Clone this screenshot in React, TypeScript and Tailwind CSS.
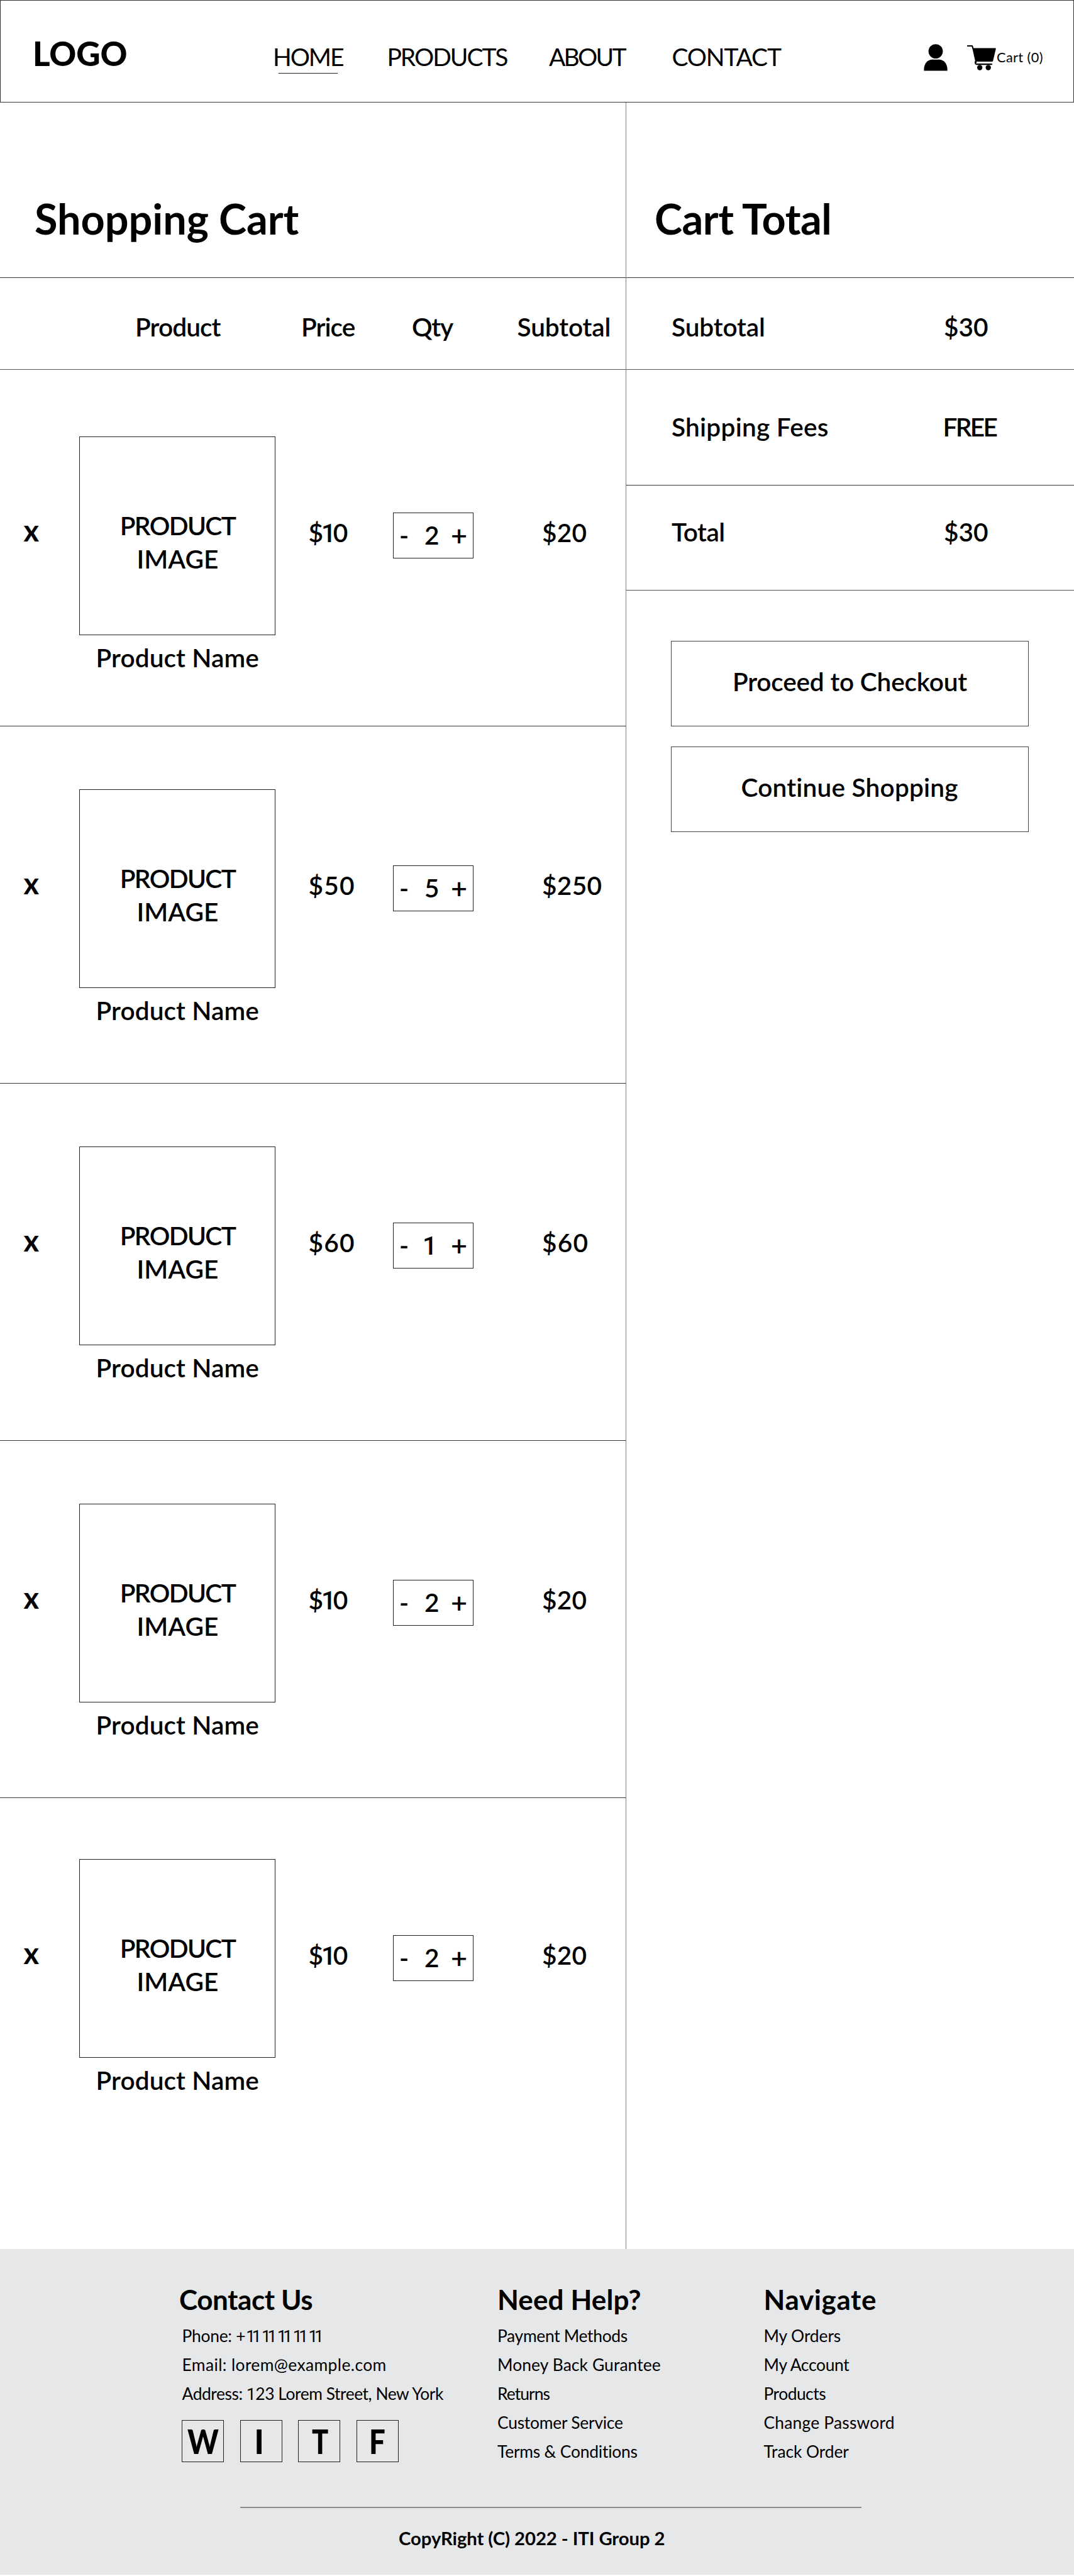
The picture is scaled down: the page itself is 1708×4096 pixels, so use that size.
import type { ReactNode } from "react";

type CartItem = {
  price: ReactNode;
  priceClass: string;
  qty: ReactNode;
  subtotal: string;
  subtotalClass: string;
  rowClass: string;
};

const One = () => <span className="mr-[-4.300px] ml-[-3px] font-[Roboto,sans-serif] font-medium">1</span>;

const ten = (
  <>
    $<One />0
  </>
);

const cartItems: CartItem[] = [
  { price: ten, priceClass: "tracking-normal", qty: "2", subtotal: "$20", subtotalClass: "tracking-[0.16px]", rowClass: "h-[567px] border-b pt-[106px]" },
  { price: "$50", priceClass: "tracking-[1.2px]", qty: "5", subtotal: "$250", subtotalClass: "tracking-[0.3px]", rowClass: "h-[568px] border-b pt-[100px]" },
  { price: "$60", priceClass: "tracking-[1.2px]", qty: <One />, subtotal: "$60", subtotalClass: "tracking-[1.2px]", rowClass: "h-[568px] border-b pt-[100px]" },
  { price: ten, priceClass: "tracking-normal", qty: "2", subtotal: "$20", subtotalClass: "tracking-[0.16px]", rowClass: "h-[568px] border-b pt-[100px]" },
  { price: ten, priceClass: "tracking-normal", qty: "2", subtotal: "$20", subtotalClass: "tracking-[0.16px]", rowClass: "h-[717px] pt-[97px]" },
];

const helpLinks = [
  { label: "Payment Methods", cls: "tracking-[-0.31px]" },
  { label: "Money Back Gurantee", cls: "tracking-[0.1px]" },
  { label: "Returns", cls: "tracking-[-0.92px]" },
  { label: "Customer Service", cls: "tracking-[-0.23px]" },
  { label: "Terms & Conditions", cls: "tracking-[-0.2px]" },
];

const navigateLinks = [
  { label: "My Orders", cls: "tracking-[-0.1px]" },
  { label: "My Account", cls: "tracking-[-0.3px]" },
  { label: "Products", cls: "tracking-[-0.5px]" },
  { label: "Change Password", cls: "tracking-[0.21px]" },
  { label: "Track Order", cls: "tracking-[-0.08px]" },
];

const socials = [
  { letter: "W", cls: "scale-x-[0.89] translate-x-[1px]" },
  { letter: "I", cls: "scale-x-[0.95] -translate-x-[3px]" },
  { letter: "T", cls: "scale-x-[0.82] translate-x-[1px]" },
  { letter: "F", cls: "scale-x-[0.86] -translate-x-[1px]" },
];

function UserIcon() {
  return (
    <svg className="mt-[69px] h-[43px] w-[38px] shrink-0" viewBox="0 0 38 43" fill="#000">
      <circle cx="19" cy="11.6" r="11.4" />
      <path d="M0.4 42.4V40.5C0.4 31.5 6 24.8 13.5 24.8H24.5C32 24.8 37.6 31.5 37.6 40.5V42.4Z" />
    </svg>
  );
}

function CartIcon() {
  return (
    <svg className="mt-[70px] ml-[31px] h-[41px] w-[46px] shrink-0" viewBox="331 87 153 137" preserveAspectRatio="none">
      <path d="M334 93.5H358L362 107" fill="none" stroke="#000" strokeWidth="7" strokeLinecap="round" strokeLinejoin="round" />
      <path d="M361 105H480Q484 105 483 110L468 173Q467 177 463 177H378Z" fill="#000" />
      <path d="M375 177L374.500 184Q375 191 382 191H461" fill="none" stroke="#000" strokeWidth="7" strokeLinecap="round" strokeLinejoin="round" />
      <path d="M362 107L379 184" fill="none" stroke="#000" strokeWidth="6" />
      <circle cx="398" cy="209" r="14" />
      <circle cx="443" cy="209" r="14" />
    </svg>
  );
}

function Header() {
  return (
    <header className="flex h-[163px] items-start border border-[#333]">
      <div className="mt-[54px] w-[433px] pl-[51px] text-[53px] leading-[60px] font-black tracking-[-0.16px]">LOGO</div>
      <nav className="flex w-[1035px] pt-[69px] text-[39px] leading-[40px]">
        <a className="w-[181.400px]">
          <span className="tracking-[-2.07px]">HOME</span>
          <span className="mt-[6px] ml-[9px] block h-px w-[94px] bg-[#231f20]" />
        </a>
        <a className="w-[257.600px] tracking-[-2.02px]">PRODUCTS</a>
        <a className="w-[195.400px] tracking-[-2.78px]">ABOUT</a>
        <a className="tracking-[-1.16px]">CONTACT</a>
      </nav>
      <UserIcon />
      <CartIcon />
      <span className="mt-[70px] ml-px text-[21.700px] leading-[40px] tracking-[0.4px] whitespace-nowrap">Cart (0)</span>
    </header>
  );
}

function CartRow({ item }: { item: CartItem }) {
  return (
    <div className={`grid grid-cols-[126px_364.500px_134.500px_237px_1fr] items-start border-[#333] ${item.rowClass}`}>
      <button className="mt-[129px] pl-[37.500px] text-left text-[47px] leading-[40px] font-bold">x</button>
      <div>
        <div className="h-[316px] w-[312px] border border-[#222] pt-[114px] pl-px text-center leading-[53.400px]">
          <div className="tracking-[-1.61px]">PRODUCT</div>
          <div className="tracking-[0.07px]">IMAGE</div>
        </div>
        <div className="mt-[16px] pl-[26.500px] leading-[40px] tracking-[0.1px]">Product Name</div>
      </div>
      <div className={`mt-[133px] leading-[40px] ${item.priceClass}`}>{item.price}</div>
      <div className="mt-[121px] flex h-[73px] w-[128px] border border-[#222] pt-[15px] pl-[9px] leading-[40px]">
        <span className="w-[40px]">-</span>
        <span className="w-[42px]">{item.qty}</span>
        <span className="text-[45px]">+</span>
      </div>
      <div className={`mt-[133px] leading-[40px] ${item.subtotalClass}`}>{item.subtotal}</div>
    </div>
  );
}

function CartTable() {
  return (
    <section className="w-[995px]">
      <h1 className="h-[279px] border-b border-[#333] pt-[144px] pl-[55px] text-[66.600px] leading-[80px] font-bold tracking-[-0.05px]">Shopping Cart</h1>
      <div className="flex h-[146px] border-b border-[#555] pt-[58px] pl-[215px] leading-[40px]">
        <span className="w-[264px] tracking-[-0.9px]">Product</span>
        <span className="w-[176px] tracking-[-0.96px]">Price</span>
        <span className="w-[167.500px] tracking-[-1.21px]">Qty</span>
        <span className="tracking-[-0.1px]">Subtotal</span>
      </div>
      {cartItems.map((item, i) => (
        <CartRow key={i} item={item} />
      ))}
    </section>
  );
}

function CartTotal() {
  return (
    <aside className="flex-1 border-l border-[#808080]">
      <h2 className="h-[279px] border-b border-[#333] pt-[144px] pl-[45px] text-[66.600px] leading-[80px] font-bold tracking-[-0.5px]">Cart Total</h2>
      <div className="flex h-[146px] border-b border-[#555] pt-[58px] pl-[72px] leading-[40px]">
        <span className="w-[433px] tracking-[-0.1px]">Subtotal</span>
        <span>$30</span>
      </div>
      <div className="flex h-[184px] border-b border-[#333] pt-[71px] pl-[72px] leading-[40px]">
        <span className="w-[431.500px] tracking-[0.24px]">Shipping Fees</span>
        <span className="tracking-[-2.7px]">FREE</span>
      </div>
      <div className="flex h-[167px] border-b border-[#555] pt-[54px] pl-[72px] leading-[40px]">
        <span className="w-[433px] tracking-[-0.49px]">Total</span>
        <span>$30</span>
      </div>
      <div className="mt-[80px] ml-[71px] flex w-[569px] flex-col gap-8">
        <button className="h-[136px] border border-[#444] pb-[5px] pl-[97px] text-left tracking-[-0.2px]">Proceed to Checkout</button>
        <button className="h-[136px] border border-[#444] pb-[5px] pl-[110.500px] text-left tracking-[0.2px]">Continue Shopping</button>
      </div>
    </aside>
  );
}

function LinkColumn({ links }: { links: { label: string; cls: string }[] }) {
  return (
    <ul className="mt-[10px] text-[26.400px] leading-[46px] font-normal">
      {links.map((l) => (
        <li key={l.label} className={l.cls}>{l.label}</li>
      ))}
    </ul>
  );
}

function Footer() {
  return (
    <footer className="h-[518px] bg-[#e6e7e9]">
      <div className="flex h-[410px] pt-[55px] pl-[285px]">
        <div className="w-[506px]">
          <h3 className="text-[44px] leading-[50px] font-bold tracking-[-0.44px]">Contact Us</h3>
          <div className="mt-[10px] pl-[4.500px] text-[26.400px] leading-[46px] font-normal whitespace-nowrap">
            <div className="h-[46px]">
              <span className="tracking-[-0.25px]">Phone: +</span>
              <span className="ml-px font-[Roboto,sans-serif] tracking-[-5.400px] [word-spacing:4.800px]">11 11 11 11 11</span>
            </div>
            <div className="h-[46px] tracking-[0.4px]">Email: lorem@example.com</div>
            <div className="h-[46px] tracking-[-0.44px]">
              Address: <span className="font-[Roboto,sans-serif]">1</span>23 Lorem Street, New York
            </div>
          </div>
          <div className="mt-[19px] ml-[4px] flex gap-[25.700px] text-[53px] font-black">
            {socials.map((s) => (
              <a key={s.letter} className="flex h-[67px] w-[67px] items-center justify-center border border-[#222] leading-[67px]">
                <span className={s.cls}>{s.letter}</span>
              </a>
            ))}
          </div>
        </div>
        <div className="w-[423.500px]">
          <h3 className="text-[44px] leading-[50px] font-bold tracking-[0.13px]">Need Help?</h3>
          <LinkColumn links={helpLinks} />
        </div>
        <div>
          <h3 className="text-[44px] leading-[50px] font-bold tracking-[0.63px]">Navigate</h3>
          <LinkColumn links={navigateLinks} />
        </div>
      </div>
      <div className="ml-[382px] h-[2px] w-[988px] bg-[#8a8b8d]" />
      <p className="mt-[28px] pl-[634px] text-[29.300px] leading-[40px] font-bold tracking-[-0.08px]">CopyRight (C) 2022 - ITI Group 2</p>
    </footer>
  );
}

export default function App() {
  return (
    <div className="h-[4096px] w-[1708px] overflow-hidden bg-white font-[Lato,sans-serif] text-[40.600px] font-normal text-black">
      <Header />
      <main className="flex h-[3413px] font-semibold">
        <CartTable />
        <CartTotal />
      </main>
      <Footer />
    </div>
  );
}
